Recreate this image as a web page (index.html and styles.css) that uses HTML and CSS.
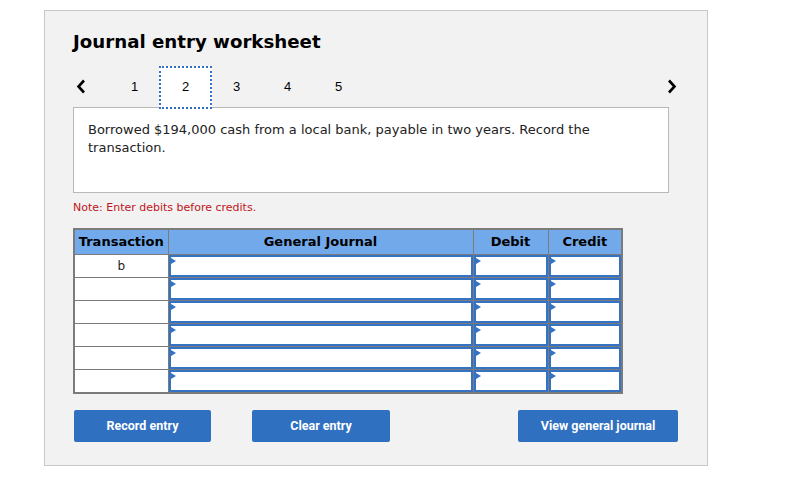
FILE: index.html
```html
<!DOCTYPE html>
<html>
<head>
<meta charset="utf-8">
<link rel="stylesheet" href="styles.css">
</head>
<body>
<div class="panel">
  <h1 class="title">Journal entry worksheet</h1>
  <div class="nav">
    <span class="arrow left"><svg width="10" height="15" viewBox="0 0 10 15"><path d="M8 1.5 L2.5 7.5 L8 13.5" fill="none" stroke="#000" stroke-width="2.6"/></svg></span>
    <div class="tabs">
      <span class="tab">1</span>
      <span class="tab active">2</span>
      <span class="tab">3</span>
      <span class="tab">4</span>
      <span class="tab">5</span>
    </div>
    <span class="arrow right"><svg width="10" height="15" viewBox="0 0 10 15"><path d="M2 1.5 L7.5 7.5 L2 13.5" fill="none" stroke="#000" stroke-width="2.6"/></svg></span>
  </div>
  <div class="prompt">Borrowed $194,000 cash from a local bank, payable in two years. Record the transaction.</div>
  <p class="note">Note: Enter debits before credits.</p>
  <table class="journal">
    <colgroup><col class="c1"><col class="c2"><col class="c3"><col class="c4"></colgroup>
    <thead>
      <tr><th>Transaction</th><th>General Journal</th><th>Debit</th><th>Credit</th></tr>
    </thead>
    <tbody>
      <tr><td class="tx">b</td><td><div class="inp"></div></td><td><div class="inp"></div></td><td><div class="inp"></div></td></tr>
      <tr><td class="tx"></td><td><div class="inp"></div></td><td><div class="inp"></div></td><td><div class="inp"></div></td></tr>
      <tr><td class="tx"></td><td><div class="inp"></div></td><td><div class="inp"></div></td><td><div class="inp"></div></td></tr>
      <tr><td class="tx"></td><td><div class="inp"></div></td><td><div class="inp"></div></td><td><div class="inp"></div></td></tr>
      <tr><td class="tx"></td><td><div class="inp"></div></td><td><div class="inp"></div></td><td><div class="inp"></div></td></tr>
      <tr><td class="tx"></td><td><div class="inp"></div></td><td><div class="inp"></div></td><td><div class="inp"></div></td></tr>
    </tbody>
  </table>
  <div class="actions">
    <button class="btn record">Record entry</button>
    <button class="btn clear">Clear entry</button>
    <button class="btn view">View general journal</button>
  </div>
</div>
</body>
</html>
```

FILE: styles.css
```css
* { box-sizing: border-box; }
html, body { margin: 0; padding: 0; background: #fff; }
body {
  font-family: "DejaVu Sans", Verdana, sans-serif;
  color: #000;
  padding: 10px 0 0 44px;
}
.panel {
  width: 664px;
  height: 456px;
  background: #f2f2f2;
  border: 1px solid #c8c8c8;
  padding: 19px 29px 0 28px;
}
.title {
  margin: 0;
  font-size: 18.2px;
  line-height: 24px;
  font-weight: bold;
}
.nav {
  display: flex;
  align-items: center;
  height: 41px;
  margin-top: 12px;
  position: relative;
}
.arrow { display: flex; align-items: center; height: 41px; }
.arrow.left { margin-left: 3px; width: 33px; }
.arrow.right { margin-left: auto; margin-right: 1px; }
.tabs { display: flex; height: 41px; }
.tab {
  width: 51px;
  height: 43px;
  display: flex;
  align-items: center;
  justify-content: center;
  font-size: 13px;
  font-family: "Liberation Sans", Arial, sans-serif;
  padding-bottom: 3px;
}
.tab.active {
  background: #fff;
  border: 2px dotted #2f6fc4;
  width: 53px;
  margin: 0 -1px;
  position: relative;
  z-index: 1;
}
.prompt {
  width: 596px;
  height: 86px;
  background: #fff;
  border: 1px solid #b8b8b8;
  padding: 13px 14px 0 14px;
  font-size: 13px;
  line-height: 18px;
  color: #222;
}
.note {
  margin: 8px 0 0 0;
  font-size: 11px;
  line-height: 14px;
  color: #c0141c;
}
.journal {
  margin-top: 13px;
  border-collapse: collapse;
  width: 548px;
  table-layout: fixed;
  border: 2px solid #7b7b7b;
}
.c1 { width: 94px; }
.c2 { width: 305px; }
.c3 { width: 75px; }
.c4 { width: 74px; }
.journal th {
  background: #71a9ea;
  height: 25px;
  font-size: 13px;
  font-weight: bold;
  border: 1px solid #7b7b7b;
  padding: 0;
}
.journal td {
  height: 22px;
  border: 1px solid #7b7b7b;
  padding: 0;
  background: #fff;
  vertical-align: top;
}
.journal td.tx {
  text-align: center;
  font-size: 12px;
  vertical-align: middle;
  color: #222;
}
.inp {
  height: 22px;
  border: 2px solid #3472c4;
  background: #fff;
  position: relative;
}
.inp::before {
  content: "";
  position: absolute;
  left: 0;
  top: 1px;
  border-left: 5px solid #3472c4;
  border-top: 3px solid transparent;
  border-bottom: 3px solid transparent;
}
.actions {
  display: flex;
  margin-top: 16px;
  margin-left: 1px;
}
.btn {
  height: 32px;
  border: none;
  border-radius: 2px;
  background: #2f70c1;
  color: #fff;
  font-family: Roboto, "Liberation Sans", Arial, sans-serif;
  font-weight: 700;
  font-size: 12.5px;
  padding: 0;
}
.record { width: 137px; }
.clear { width: 138px; margin-left: 41px; }
.view { width: 160px; margin-left: auto; }
```
